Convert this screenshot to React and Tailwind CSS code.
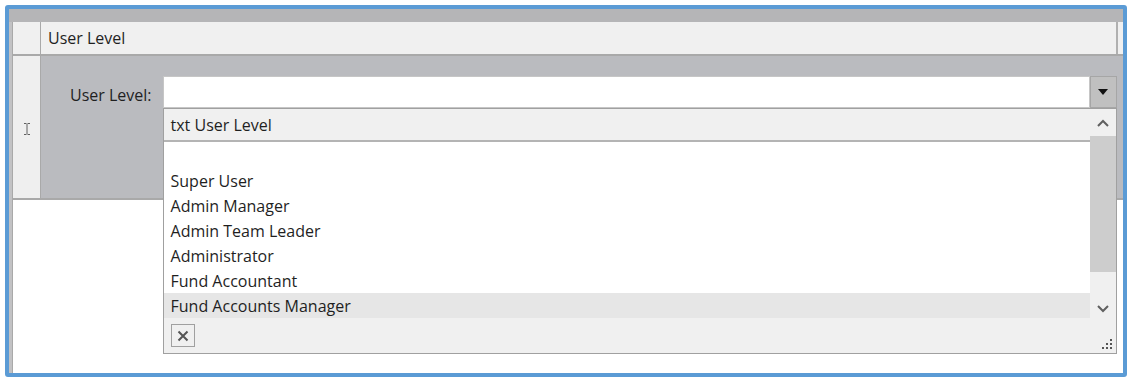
import React from "react";

const items = ["", "Super User", "Admin Manager", "Admin Team Leader", "Administrator", "Fund Accountant", "Fund Accounts Manager"];

function IBeam() {
  return (
    <svg width="8" height="12" viewBox="0 0 8 12" fill="none" stroke="#606060" strokeWidth="1">
      <path d="M1 0.5h2.5M4.5 0.5h2.5M4 1v10M1 11.5h2.5M4.5 11.5h2.5" />
    </svg>
  );
}

export default function App() {
  return (
    <div className="w-[1137px] h-[389px] bg-white pt-[5px] pl-[5px] text-[#1f1f1f]" style={{ fontFamily: '"Open Sans", "Noto Sans", sans-serif' }}>
      <div className="w-[1122px] h-[372px] border-4 border-[#5b9bd5] rounded-[3px] bg-white flex flex-col overflow-hidden">
        <div className="h-[13px] bg-[#b5b5b7] shrink-0" />
        <div className="flex-1 flex min-h-0">
          <div className="w-[4px] bg-[#c2c2c4] border-r border-[#a9a9a9] shrink-0" />
          <div className="flex-1 flex flex-col">
            {/* header row */}
            <div className="h-[34px] flex border-b-2 border-[#a9a9a9] bg-[#f0f0f0] shrink-0">
              <div className="w-[28px] border-r border-[#a9a9a9]" />
              <div className="flex-1 flex items-center pl-[7px] text-[16px] border-r-2 border-[#b0b0b0]">User Level</div>
              <div className="w-[5px]" />
            </div>
            {/* content row */}
            <div className="h-[144px] flex border-b-2 border-[#a9a9a9] shrink-0">
              <div className="w-[28px] bg-[#efefef] border-r border-[#a9a9a9] flex items-center justify-center pt-[3px]">
                <IBeam />
              </div>
              <div className="flex-1 bg-[#babbbf] flex items-start pl-[29px] pt-[20px]">
                <div className="h-[32px] flex items-center pt-[6px] text-[16px] mr-[11px]">User Level:</div>
                <div className="relative w-[954px] h-[32px] flex">
                  <div className="flex-1 bg-white border border-[#c6c6c6]" />
                  <div className="w-[27px] bg-[#c0c0c0] border border-[#a6a6a6] flex items-center justify-center">
                    <svg width="10" height="6" viewBox="0 0 10 6"><path d="M0 0h10L5 6z" fill="#111" /></svg>
                  </div>
                  {/* dropdown popup */}
                  <div className="absolute left-0 top-[32px] w-[954px] h-[246px] border border-[#a0a0a0] bg-white flex flex-col z-10">
                    <div className="flex flex-1 min-h-0">
                      <div className="flex-1 flex flex-col">
                        <div className="h-[34px] bg-[#f0f0f0] border-b-2 border-[#b4b4b4] flex items-center pl-[7px] text-[16px]">txt User Level</div>
                        <div className="flex flex-col pt-[1px]">
                          {items.map((t, i) => (
                            <div
                              key={i}
                              className={
                                "h-[25px] flex items-center pl-[7px] text-[16px] " +
                                (i === items.length - 1 ? "bg-[#e6e6e6]" : "")
                              }
                            >
                              {t}
                            </div>
                          ))}
                        </div>
                      </div>
                      <div className="w-[26px] flex flex-col bg-[#f0f0f0] pt-[1px]">
                        <div className="h-[26px] flex items-center justify-center">
                          <svg width="12" height="8" viewBox="0 0 12 8"><path d="M1 7l5-5 5 5" fill="none" stroke="#606060" strokeWidth="2" /></svg>
                        </div>
                        <div className="h-[136px] bg-[#cdcdcd]" />
                        <div className="flex-1 flex items-end justify-center pb-[5px]">
                          <svg width="12" height="8" viewBox="0 0 12 8"><path d="M1 1l5 5 5-5" fill="none" stroke="#606060" strokeWidth="2" /></svg>
                        </div>
                      </div>
                    </div>
                    <div className="h-[35px] bg-[#f0f0f0] flex items-center pl-[7px] relative shrink-0">
                      <div className="w-[24px] h-[23px] border border-[#a0a0a0] bg-[#f0f0f0] flex items-center justify-center">
                        <svg width="12" height="12" viewBox="0 0 12 12"><path d="M1.5 1.5l9 9M10.5 1.5l-9 9" stroke="#555" strokeWidth="2" /></svg>
                      </div>
                      <svg className="absolute right-[3px] bottom-[3px]" width="11" height="11" viewBox="0 0 11 11" fill="#555">
                        <rect x="8" y="0" width="2" height="2" />
                        <rect x="4" y="4" width="2" height="2" />
                        <rect x="8" y="4" width="2" height="2" />
                        <rect x="0" y="8" width="2" height="2" />
                        <rect x="4" y="8" width="2" height="2" />
                        <rect x="8" y="8" width="2" height="2" />
                      </svg>
                    </div>
                  </div>
                </div>
              </div>
            </div>
            <div className="flex-1 bg-white" />
          </div>
        </div>
      </div>
    </div>
  );
}
